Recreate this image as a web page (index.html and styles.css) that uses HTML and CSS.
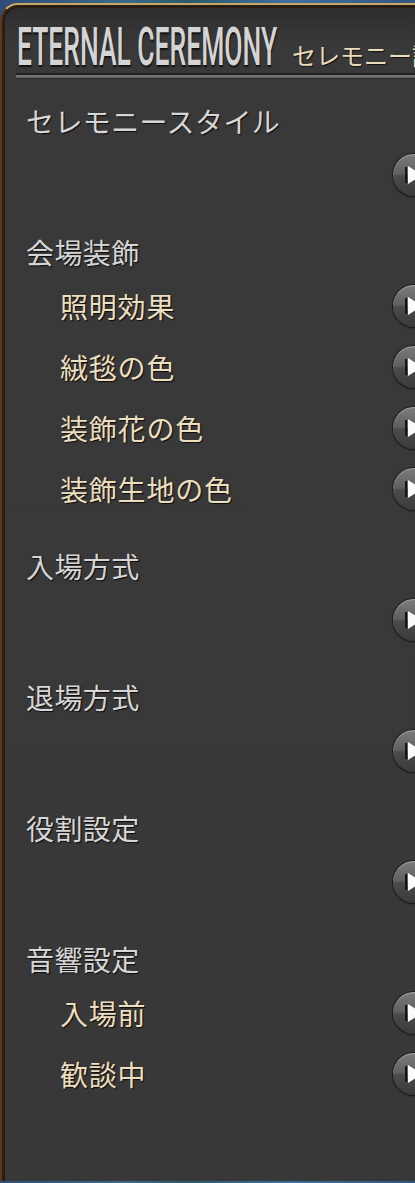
FILE: index.html
```html
<!DOCTYPE html>
<html lang="ja">
<head>
<meta charset="utf-8">
<title>ETERNAL CEREMONY</title>
<link rel="stylesheet" href="styles.css">
</head>
<body>
<div class="window">
  <div class="panel">
    <div class="title-row">
      <div class="title-en-box"><span class="title-en">ETERNAL CEREMONY</span></div>
      <span class="title-ja">セレモニー設定</span>
    </div>
    <div class="separator"></div>
    <div class="list">
      <div class="section">
        <div class="header">セレモニースタイル</div>
        <div class="row"><span class="label"></span><span class="btn"></span></div>
      </div>
      <div class="section">
        <div class="header">会場装飾</div>
        <div class="row"><span class="label">照明効果</span><span class="btn"></span></div>
        <div class="row"><span class="label">絨毯の色</span><span class="btn"></span></div>
        <div class="row"><span class="label">装飾花の色</span><span class="btn"></span></div>
        <div class="row"><span class="label">装飾生地の色</span><span class="btn"></span></div>
      </div>
      <div class="section">
        <div class="header">入場方式</div>
        <div class="row"><span class="label"></span><span class="btn"></span></div>
      </div>
      <div class="section">
        <div class="header">退場方式</div>
        <div class="row"><span class="label"></span><span class="btn"></span></div>
      </div>
      <div class="section">
        <div class="header">役割設定</div>
        <div class="row"><span class="label"></span><span class="btn"></span></div>
      </div>
      <div class="section">
        <div class="header">音響設定</div>
        <div class="row"><span class="label">入場前</span><span class="btn"></span></div>
        <div class="row"><span class="label">歓談中</span><span class="btn"></span></div>
      </div>
    </div>
  </div>
</div>
</body>
</html>
```
FILE: styles.css
```css
html, body {
  margin: 0;
  padding: 0;
}
body {
  width: 415px;
  height: 1183px;
  overflow: hidden;
  background: linear-gradient(90deg, #2f4d78 0%, #3a6a8a 30%, #2c5a6a 45%, #3d6fa0 70%, #35557f 100%);
  font-family: "Noto Sans CJK JP", "Noto Sans", sans-serif;
}
.window {
  margin-top: 3px;
  border-top: 2px solid #c6a96a;
  border-left: 2px solid #5a3920;
  border-top-left-radius: 18px;
  background: #2a1d15;
  padding: 3px 0 0 3px;
  min-height: 1178px;
  box-sizing: border-box;
}
.panel {
  border-top-left-radius: 14px;
  background: linear-gradient(#2d2d2d 0px, #393939 36px, #383838 100%);
  min-height: 1173px;
  overflow: hidden;
  padding-top: 12px;
  box-sizing: border-box;
}
.title-row {
  display: flex;
  align-items: baseline;
  padding-left: 12px;
  height: 53px;
  white-space: nowrap;
}
.title-en-box {
  width: 275px;
  flex: none;
  line-height: 53px;
}
.title-en {
  display: inline-block;
  font-family: Roboto, "Liberation Sans", sans-serif;
  font-weight: 500;
  font-size: 54px;
  line-height: 53px;
  color: #d4d4d4;
  transform: scaleX(0.49);
  transform-origin: left center;
  text-shadow: 1px 2px 2px #111;
}
.title-ja {
  font-size: 24px;
  color: #eadcba;
  text-shadow: 1px 1px 1px #111;
}
.separator {
  margin-left: 11px;
  height: 3px;
  border-top: 2px solid #1e1e1e;
  border-bottom: 1px solid #2a2a2a;
  background: linear-gradient(#7a7a7a, #5e5e5e);
}
.list {
  margin-top: 19px;
}
.section + .section {
  margin-top: 24px;
}
.header {
  height: 46px;
  display: flex;
  align-items: center;
  padding-left: 21px;
  font-size: 28px;
  letter-spacing: 0.4px;
  color: #d6d6d6;
  text-shadow: 1px 1px 1px #0c0c0c;
}
.row {
  height: 61px;
  display: flex;
  align-items: center;
  justify-content: space-between;
  padding-left: 55px;
}
.label {
  font-size: 28px;
  letter-spacing: 0.8px;
  color: #ecdfbf;
  text-shadow: 1px 1px 1px #0c0c0c;
}
.btn {
  position: relative;
  flex: none;
  width: 42px;
  height: 42px;
  border-radius: 50%;
  margin-right: -20px;
  background: linear-gradient(#7c7c7c 0%, #5f5f5f 48%, #4c4c4c 52%, #3a3a3a 100%);
  box-shadow: 0 0 0 1px #1c1c1c, inset 0 1px 1px rgba(255, 255, 255, 0.3), 0 1px 2px rgba(0, 0, 0, 0.6);
}
.btn::before {
  content: "";
  position: absolute;
  left: 12px;
  top: 13px;
  width: 2px;
  height: 16px;
  background: #151515;
}
.btn::after {
  content: "";
  position: absolute;
  left: 15px;
  top: 12px;
  border-left: 14px solid #fafafa;
  border-top: 9px solid transparent;
  border-bottom: 9px solid transparent;
}
```
